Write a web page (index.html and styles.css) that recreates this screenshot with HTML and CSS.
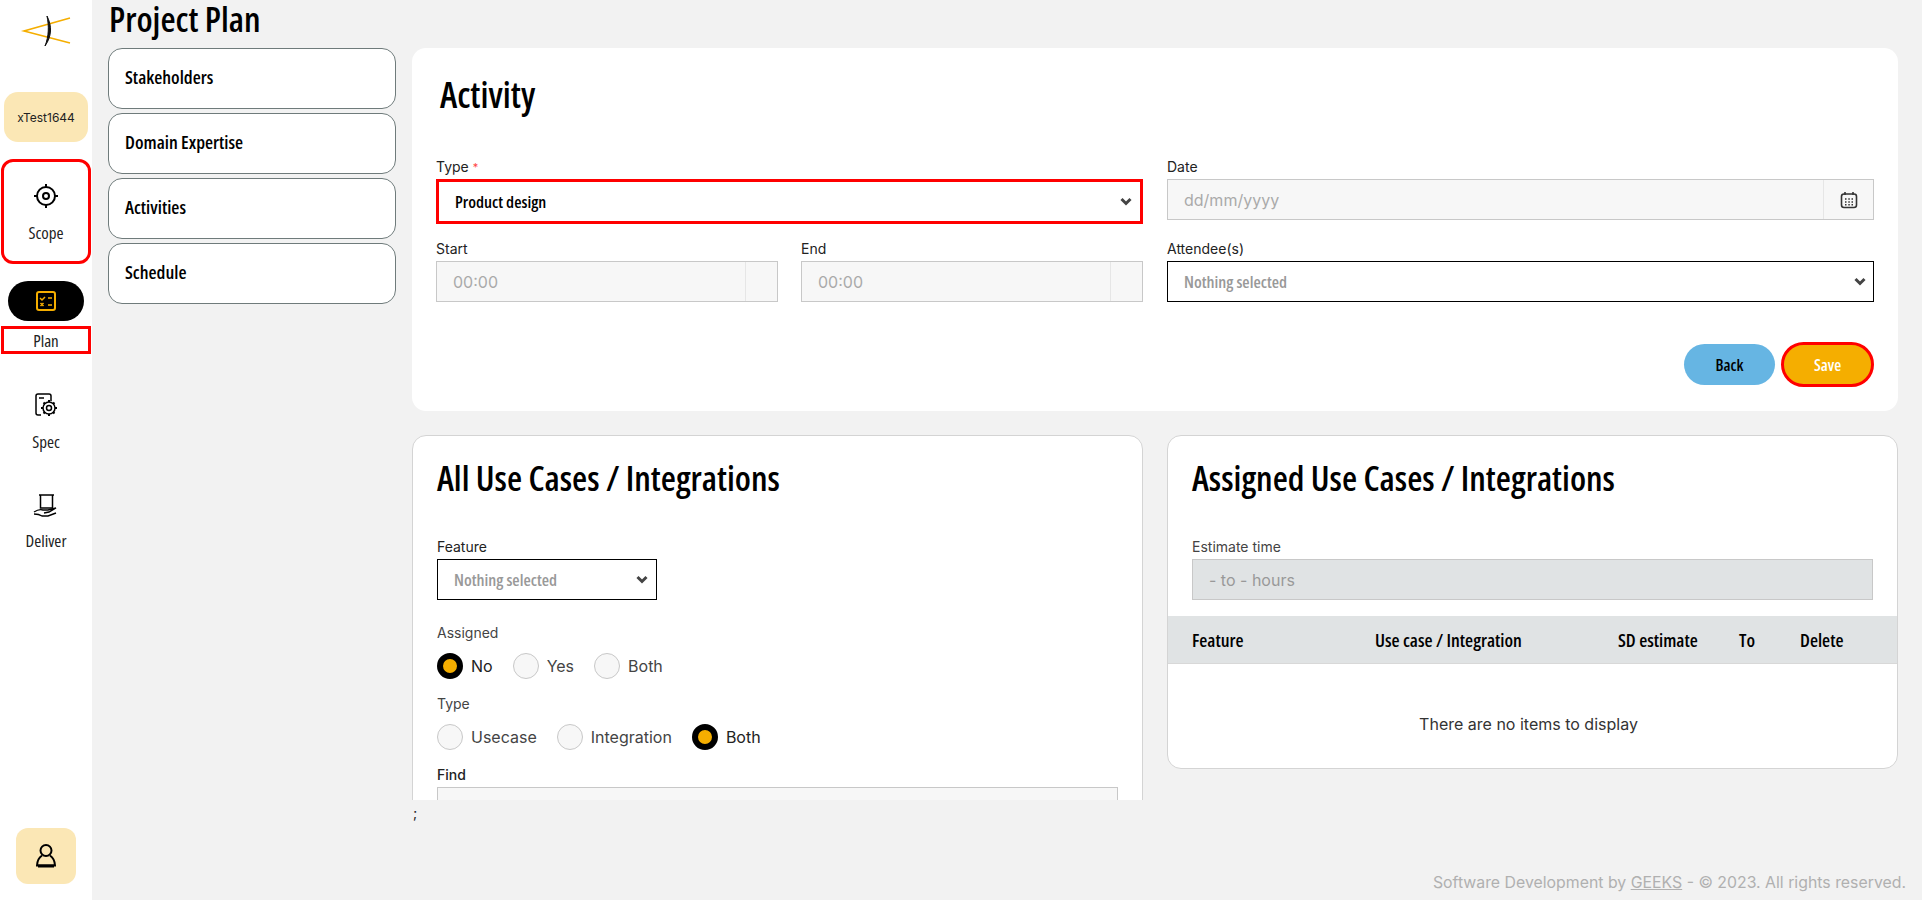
FILE: index.html
```html
<!DOCTYPE html>
<html lang="en">
<head>
    <meta charset="UTF-8">
    <meta name="viewport" content="width=device-width, initial-scale=1.0">
    <title>Project Plan</title>
    <link rel="stylesheet" href="styles.css">
</head>
<body>
    <nav class="sidebar">
        <svg class="logo" width="92" height="60" viewBox="0 0 92 60">
            <path d="M70 18 L24 31 L70 43" fill="none" stroke="#f5ae00" stroke-width="1.6"/>
            <path d="M47 16 C52 26 52 36 45 46 C49 36 49 26 47 16 Z" fill="#111" stroke="#111" stroke-width="1"/>
        </svg>
        <div class="user-pill">xTest1644</div>
        <a class="nav-item nav-scope">
            <svg width="26" height="26" viewBox="0 0 26 26" fill="none" stroke="#000" stroke-width="2">
                <circle cx="13" cy="13" r="9"/>
                <circle cx="13" cy="13" r="3"/>
                <path d="M13 1v4M13 21v4M1 13h4M21 13h4"/>
            </svg>
            <span>Scope</span>
        </a>
        <div class="plan-pill">
            <svg width="22" height="22" viewBox="0 0 22 22" fill="none" stroke="#f5ae00" stroke-width="2">
                <rect x="2" y="2" width="18" height="18" rx="2"/>
                <path d="M5 8l2 2 3-3M13 8h4M5.500 13l3 3M8.500 13l-3 3M13 15h4" stroke-width="1.500"/>
            </svg>
        </div>
        <a class="nav-label-active">Plan</a>
        <a class="nav-item nav-spec">
            <svg width="26" height="26" viewBox="0 0 26 26" fill="none" stroke="#000" stroke-width="1.500">
                <path d="M8 23H5a2 2 0 0 1-2-2V4a2 2 0 0 1 2-2h11a2 2 0 0 1 2 2v5"/>
                <path d="M6 6h5"/>
                <circle cx="16" cy="16" r="2.500"/>
                <circle cx="16" cy="16" r="6"/>
                <path d="M16 8v2M16 22v2M8 16h2M22 16h2M10.500 10.500l1.500 1.500M20 20l1.500 1.500M21.500 10.500L20 12M12 20l-1.500 1.500" stroke-width="2"/>
            </svg>
            <span>Spec</span>
        </a>
        <a class="nav-item nav-deliver">
            <svg width="26" height="26" viewBox="0 0 26 26" fill="none" stroke="#000" stroke-width="1.500">
                <path d="M6 2h15M7.500 2v13h12V2"/>
                <path d="M1 19c3-2 6-3 9-2h5l8-2-7 4-5 1M1 21c3 0 5 0 8 2h6l8-3" stroke-width="1.400"/>
            </svg>
            <span>Deliver</span>
        </a>
        <div class="user-button">
            <svg width="20" height="24" viewBox="0 0 20 24" fill="none" stroke="#000" stroke-width="2">
                <circle cx="10" cy="6.500" r="5.500"/>
                <path d="M6 11.500C3 13.500 1.200 17 1 21.500h18C18.800 17 17 13.500 14 11.500"/>
                <path d="M2 22h16" stroke-width="3"/>
            </svg>
        </div>
    </nav>

    <main class="main">
        <h1 class="page-title">Project Plan</h1>
        <div class="content">
            <div class="tabs">
                <a class="tab">Stakeholders</a>
                <a class="tab">Domain Expertise</a>
                <a class="tab">Activities</a>
                <a class="tab">Schedule</a>
            </div>

            <div class="panels">
                <section class="card activity-card">
                    <h2 class="activity-title">Activity</h2>
                    <div class="activity-grid">
                        <div class="field">
                            <label>Type <span class="req">*</span></label>
                            <div class="select select-type"><span>Product design</span><svg class="chev" viewBox="0 0 12 9"><path d="M1.500 2L6 6.500 10.500 2" /></svg></div>
                        </div>
                        <div class="field">
                            <label>Date</label>
                            <div class="input input-addon"><span>dd/mm/yyyy</span>
                                <i class="addon">
                                    <svg width="18" height="18" viewBox="0 0 18 18" fill="none" stroke="#333" stroke-width="1.600">
                                        <rect x="1.500" y="3" width="15" height="13.500" rx="2.500"/>
                                        <path d="M5 1v3M13 1v3"/>
                                        <path d="M5 8h1.500M8.300 8h1.500M11.500 8h1.500M5 11h1.500M8.300 11h1.500M11.500 11h1.500M5 13.700h1.500M8.300 13.700h1.500M11.500 13.700h1.500"/>
                                    </svg>
                                </i>
                            </div>
                        </div>
                        <div class="field-pair">
                            <div class="field">
                                <label>Start</label>
                                <div class="input input-addon time"><span>00:00</span><i class="addon"></i></div>
                            </div>
                            <div class="field">
                                <label>End</label>
                                <div class="input input-addon time"><span>00:00</span><i class="addon"></i></div>
                            </div>
                        </div>
                        <div class="field">
                            <label>Attendee(s)</label>
                            <div class="select select-attendee"><span class="muted">Nothing selected</span><svg class="chev" viewBox="0 0 12 9"><path d="M1.500 2L6 6.500 10.500 2" /></svg></div>
                        </div>
                    </div>
                    <div class="actions">
                        <button class="btn btn-back">Back</button>
                        <button class="btn btn-save">Save</button>
                    </div>
                </section>

                <div class="lower">
                    <section class="card bordered all-card">
                        <h2>All Use Cases / Integrations</h2>
                        <div class="field">
                            <label>Feature</label>
                            <div class="select select-feature"><span class="muted">Nothing selected</span><svg class="chev" viewBox="0 0 12 9"><path d="M1.500 2L6 6.500 10.500 2" /></svg></div>
                        </div>
                        <div class="field field-first">
                            <label class="soft">Assigned</label>
                            <div class="radios">
                                <span class="radio on">No</span>
                                <span class="radio">Yes</span>
                                <span class="radio">Both</span>
                            </div>
                        </div>
                        <div class="field radio-field">
                            <label class="soft">Type</label>
                            <div class="radios">
                                <span class="radio">Usecase</span>
                                <span class="radio">Integration</span>
                                <span class="radio on">Both</span>
                            </div>
                        </div>
                        <div class="field radio-field">
                            <label class="strong">Find</label>
                            <div class="input"></div>
                        </div>
                    </section>

                    <section class="card bordered assigned-card">
                        <h2>Assigned Use Cases / Integrations</h2>
                        <div class="field">
                            <label class="soft">Estimate time</label>
                            <div class="input input-grey"><span>- to - hours</span></div>
                        </div>
                        <div class="table-head">
                            <span>Feature</span>
                            <span>Use case / Integration</span>
                            <span>SD estimate</span>
                            <span>To</span>
                            <span>Delete</span>
                        </div>
                        <div class="table-empty">There are no items to display</div>
                    </section>
                </div>
            </div>
        </div>
        <div class="stray">;</div>
        <footer class="footer">Software Development by <u>GEEKS</u> - © 2023. All rights reserved.</footer>
    </main>
</body>
</html>
```

FILE: styles.css
```css
*, *::before {
    box-sizing: border-box;
}
body {
    margin: 0;
    display: flex;
    height: 900px;
    overflow: hidden;
    background-color: #f2f2f2;
    color: #222;
    font-family: 'Inter', sans-serif;
}
h1, h2 {
    margin: 0;
    font-family: 'Open Sans', sans-serif;
    font-stretch: 75%;
    font-weight: 600;
    color: #000;
}

/* sidebar */
.sidebar {
    width: 92px;
    flex-shrink: 0;
    height: 900px;
    background-color: #fff;
    display: flex;
    flex-direction: column;
    align-items: center;
}
.logo {
    display: block;
    margin-bottom: 32px;
}
.user-pill {
    width: 84px;
    height: 50px;
    background-color: #fbe7b5;
    border-radius: 14px;
    font-size: 12px;
    display: flex;
    align-items: center;
    justify-content: center;
}
.nav-item {
    display: flex;
    flex-direction: column;
    align-items: center;
    font-family: 'Open Sans', sans-serif;
    font-stretch: 75%;
    font-size: 17px;
}
.nav-item span {
    margin-top: 12px;
}
.nav-scope {
    width: 90px;
    height: 105px;
    margin-top: 17px;
    padding-top: 21px;
    border: 3px solid #f00;
    border-radius: 12px;
}
.plan-pill {
    width: 76px;
    height: 40px;
    margin-top: 17px;
    background-color: #000;
    border-radius: 20px;
    display: flex;
    align-items: center;
    justify-content: center;
}
.nav-label-active {
    width: 90px;
    height: 28px;
    margin-top: 5px;
    border: 3px solid #f00;
    font-family: 'Open Sans', sans-serif;
    font-stretch: 75%;
    font-size: 17px;
    display: flex;
    align-items: center;
    justify-content: center;
}
.nav-spec {
    margin-top: 38px;
}
.nav-deliver {
    margin-top: 40px;
}
.nav-deliver span {
    margin-top: 10px;
}
.user-button {
    width: 60px;
    height: 56px;
    margin-top: auto;
    margin-bottom: 16px;
    background-color: #fbe7b5;
    border-radius: 12px;
    display: flex;
    align-items: center;
    justify-content: center;
}

/* main column */
.main {
    flex: 1;
    min-width: 0;
    height: 900px;
    display: flex;
    flex-direction: column;
    padding: 0 24px 0 16px;
}
.page-title {
    height: 48px;
    font-size: 34.800px;
    line-height: 37px;
    padding-left: 1px;
}
.content {
    display: flex;
    gap: 16px;
    height: 752px;
    flex-shrink: 0;
    overflow: hidden;
}
.tabs {
    width: 288px;
    flex-shrink: 0;
    display: flex;
    flex-direction: column;
    gap: 4px;
}
.tab {
    height: 61px;
    padding: 16px 16px 0;
    background-color: #fff;
    border: 1px solid #6f7b7b;
    border-radius: 14px;
    font-family: 'Open Sans', sans-serif;
    font-stretch: 75%;
    font-weight: 600;
    font-size: 18.500px;
    line-height: 24px;
    color: #000;
}
.panels {
    flex: 1;
    min-width: 0;
}
.card {
    background-color: #fff;
    border-radius: 14px;
}
.bordered {
    border: 1px solid #d4d4d4;
}
.activity-card {
    height: 363px;
    padding: 27px 24px 0;
}
.activity-title {
    font-size: 35.500px;
    line-height: 38px;
    padding-left: 4px;
    margin-bottom: 45px;
}
.activity-grid {
    display: grid;
    grid-template-columns: 707px 707px;
    column-gap: 24px;
    row-gap: 16px;
}
.field label {
    display: block;
    font-size: 14px;
    line-height: 18px;
    margin-bottom: 3px;
    color: #222;
}
.field label.soft {
    color: #444;
}
.field label.strong {
    font-weight: 500;
}
.req {
    color: #f44;
    font-size: 11px;
    vertical-align: 1px;
}
.field-pair {
    display: grid;
    grid-template-columns: 342px 342px;
    column-gap: 23px;
}
.select, .input {
    height: 41px;
    display: flex;
    align-items: center;
    padding: 0 16px;
    font-size: 16px;
}
.select {
    justify-content: space-between;
    background-color: #fff;
    border: 1px solid #000;
    padding-right: 7px;
    font-family: 'Open Sans', sans-serif;
    font-stretch: 75%;
    font-weight: 600;
    font-size: 16.800px;
}
.select-type {
    height: 45px;
    border: 3px solid #f00;
    color: #000;
    padding-left: 16px;
    padding-right: 8px;
}
.muted {
    color: #999;
}
.chev {
    width: 12px;
    height: 9px;
    fill: none;
    stroke: #444;
    stroke-width: 3;
}
.input {
    background-color: #f7f7f7;
    border: 1px solid #c8c8c8;
    color: #aaa;
}
.input-addon {
    justify-content: space-between;
    padding-right: 0;
}
.addon {
    width: 50px;
    height: 39px;
    border-left: 1px solid #e6e6e6;
    display: flex;
    align-items: center;
    justify-content: center;
}
.time .addon {
    width: 32px;
}
.input-grey {
    background-color: #e0e3e4;
    color: #999;
}
.actions {
    display: flex;
    justify-content: flex-end;
    align-items: center;
    gap: 6px;
    margin-top: 40px;
}
.btn {
    width: 91px;
    height: 41px;
    border: none;
    border-radius: 21px;
    font-family: 'Open Sans', sans-serif;
    font-stretch: 75%;
    font-weight: 600;
    font-size: 16px;
    cursor: pointer;
}
.btn-back {
    background-color: #66b5e3;
    color: #000;
}
.btn-save {
    width: 93px;
    height: 45px;
    border-radius: 23px;
    background-color: #f5ae00;
    border: 3px solid #f00;
    color: #fff;
}

/* lower cards */
.lower {
    display: grid;
    grid-template-columns: 731px 731px;
    column-gap: 24px;
    align-items: start;
    margin-top: 24px;
}
.lower h2 {
    font-size: 34.800px;
    line-height: 38px;
    margin-bottom: 41px;
}
.all-card {
    height: 400px;
    padding: 23px 24px 0;
}
.assigned-card {
    height: 334px;
    padding: 23px 24px 0;
}
.select-feature {
    width: 220px;
    padding-right: 8px;
}
.field-first {
    margin-top: 24px;
}
.radio-field {
    margin-top: 16px;
}
.radios {
    display: flex;
    gap: 20px;
    margin-top: 11px;
}
.radio {
    display: flex;
    align-items: center;
    gap: 8px;
    height: 26px;
    font-size: 16px;
    color: #444;
}
.radio::before {
    content: "";
    width: 26px;
    height: 26px;
    flex-shrink: 0;
    border-radius: 50%;
    background-color: #f7f7f7;
    border: 1px solid #c8c8c8;
}
.radio.on {
    color: #222;
}
.radio.on::before {
    background-color: #f5ae00;
    border: 6px solid #000;
}
.table-head {
    height: 48px;
    margin: 16px -24px 0;
    background-color: #e0e3e4;
    border-bottom: 1px solid #d8d8d8;
    font-family: 'Open Sans', sans-serif;
    font-stretch: 75%;
    font-weight: 600;
    font-size: 18.500px;
    color: #000;
    display: grid;
    grid-template-columns: 183px 243px 121px 61px 1fr;
    align-items: center;
    padding-left: 24px;
}
.table-empty {
    text-align: center;
    font-size: 16px;
    line-height: 20px;
    margin-top: 50px;
    margin-right: 8px;
    color: #333;
}

/* bottom */
.stray {
    margin-left: 305px;
    font-size: 14px;
    line-height: 18px;
    margin-top: 4px;
}
.footer {
    margin-top: auto;
    margin-bottom: 7px;
    margin-right: -8px;
    text-align: right;
    font-size: 15.850px;
    line-height: 20px;
    color: #b0b0b0;
}
```
